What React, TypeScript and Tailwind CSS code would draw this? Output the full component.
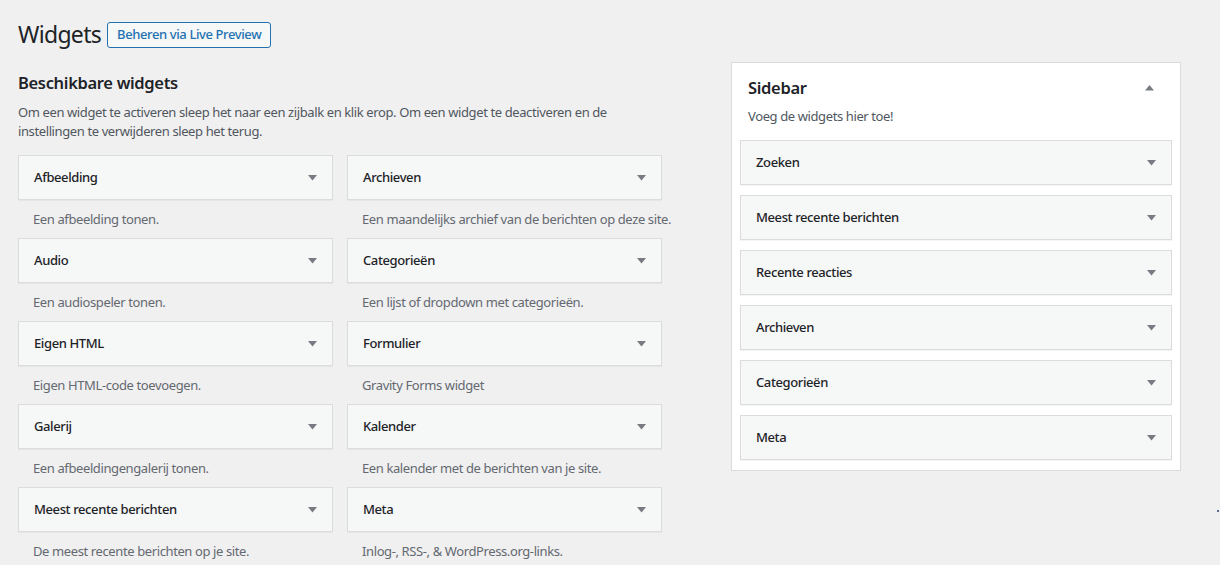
import React from "react";

interface Widget {
  title: string;
  desc: string;
}

const available: Widget[] = [
  { title: "Afbeelding", desc: "Een afbeelding tonen." },
  { title: "Archieven", desc: "Een maandelijks archief van de berichten op deze site." },
  { title: "Audio", desc: "Een audiospeler tonen." },
  { title: "Categorieën", desc: "Een lijst of dropdown met categorieën." },
  { title: "Eigen HTML", desc: "Eigen HTML-code toevoegen." },
  { title: "Formulier", desc: "Gravity Forms widget" },
  { title: "Galerij", desc: "Een afbeeldingengalerij tonen." },
  { title: "Kalender", desc: "Een kalender met de berichten van je site." },
  { title: "Meest recente berichten", desc: "De meest recente berichten op je site." },
  { title: "Meta", desc: "Inlog-, RSS-, & WordPress.org-links." },
];

const sidebarWidgets = [
  "Zoeken",
  "Meest recente berichten",
  "Recente reacties",
  "Archieven",
  "Categorieën",
  "Meta",
];

function Arrow({ up = false }: { up?: boolean }) {
  return (
    <svg width="9" height="6" viewBox="0 0 9 6" className="shrink-0">
      {up ? (
        <path d="M0 5.5 L4.5 0 L9 5.5 Z" fill="#787c82" />
      ) : (
        <path d="M0 0 L9 0 L4.5 5.5 Z" fill="#787c82" />
      )}
    </svg>
  );
}

function WidgetCard({ title }: { title: string }) {
  return (
    <div className="h-[45px] flex items-center justify-between border border-[#dcdcde] bg-[#f6f7f7] pl-[15px] pr-[15px] shadow-[0_1px_1px_rgba(0,0,0,0.04)]">
      <span className="font-medium text-[#1d2327]">{title}</span>
      <Arrow />
    </div>
  );
}

export default function App() {
  return (
    <div className="relative h-[565px] overflow-hidden bg-[#f0f0f1] text-[13px] leading-[19px] tracking-[-0.03em] text-[#3c434a] font-['Segoe_UI','Noto_Sans',sans-serif]">
      <div className="flex items-start gap-[69px] pl-[18px] pt-[20px]">
        {/* beschikbare widgets */}
        <div className="w-[644px]">
          <div className="flex h-[29px] items-center gap-[6px]">
            <h1 className="text-[23px] leading-[29px] font-normal text-[#1d2327] tracking-[-0.03em]">Widgets</h1>
            <button className="h-[26px] rounded-[3px] border border-[#2271b1] bg-[#f6f7f7] px-[9px] text-[13px] font-medium text-[#2271b1]">
              Beheren via Live Preview
            </button>
          </div>

          <h2 className="mt-[22px] text-[16.5px] leading-[24px] font-semibold text-[#1d2327] tracking-[-0.02em]">
            Beschikbare widgets
          </h2>
          <p className="mt-[8px] whitespace-nowrap text-[#50575e]">
            Om een widget te activeren sleep het naar een zijbalk en klik erop. Om een widget te deactiveren en de
            <br />
            instellingen te verwijderen sleep het terug.
          </p>

          <div className="mt-[14px] grid grid-cols-2 gap-x-[14px]">
            {available.map((w) => (
              <div key={w.title}>
                <WidgetCard title={w.title} />
                <div className="flex h-[38px] items-center whitespace-nowrap pl-[15px] text-[#646970]">{w.desc}</div>
              </div>
            ))}
          </div>
        </div>

        {/* sidebar */}
        <div className="mt-[42px] w-[450px] border border-[#dcdcde] bg-white px-[8px] pb-[10px]">
          <div className="flex items-center justify-between pl-[8px] pr-[18px] pt-[13px]">
            <h2 className="text-[16.5px] leading-[24px] font-semibold text-[#1d2327] tracking-[-0.02em]">Sidebar</h2>
            <Arrow up />
          </div>
          <p className="mt-[7px] pl-[8px] text-[#50575e]">Voeg de widgets hier toe!</p>
          <div className="mt-[14px] flex flex-col gap-[10px]">
            {sidebarWidgets.map((t) => (
              <WidgetCard key={t} title={t} />
            ))}
          </div>
        </div>
      </div>

      <span className="absolute left-[1217px] top-[510px] h-[2px] w-[2px] rounded-full bg-[#2c3e70]" />
    </div>
  );
}
